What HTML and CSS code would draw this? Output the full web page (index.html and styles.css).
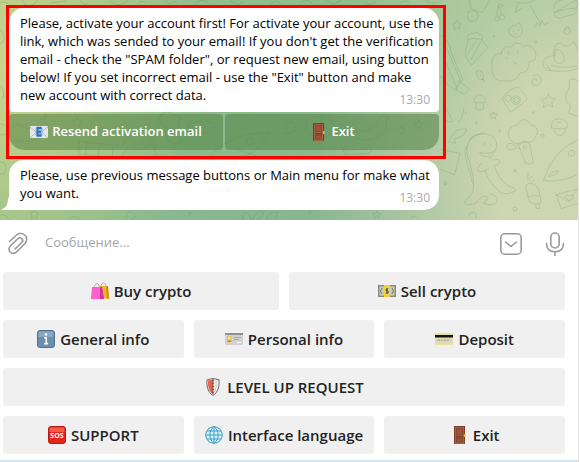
FILE: index.html
```html
<!DOCTYPE html>
<html lang="en">
<head>
    <meta charset="UTF-8">
    <meta name="viewport" content="width=device-width, initial-scale=1.0">
    <title>Chat</title>
    <link rel="stylesheet" href="styles.css">
</head>
<body>
    <!-- shared icons -->
    <svg class="defs" width="0" height="0" aria-hidden="true">
        <symbol id="door" viewBox="0 0 18 18">
            <rect x="4" y="0" width="11" height="18" fill="#7c3f26"/>
            <rect x="5" y="1" width="9" height="17" fill="#a5603f"/>
            <rect x="6.500" y="2.500" width="6" height="6" fill="#99563a" stroke="#7f452d" stroke-width=".8"/>
            <rect x="6" y="10" width="7" height="1.500" fill="#7a3c25"/>
            <rect x="6.500" y="12.500" width="6" height="3.500" fill="#99563a" stroke="#7f452d" stroke-width=".8"/>
            <rect x="14" y="8" width="1.500" height="3" fill="#e2b93b"/>
        </symbol>
    </svg>

    <div class="app">
        <main class="chat">
            <svg class="doodles" width="580" height="220" viewBox="0 0 580 220" aria-hidden="true">
                <g transform="translate(440 0) scale(.3333)">
                    <!-- cake -->
                    <path d="M75 165 L84 118 Q76 106 88 105 Q92 95 102 101 Q114 92 119 104 Q134 103 126 118 L143 143 L94 197 Z M84 118 Q104 112 126 118 M80 167 L111 118 M92 180 L123 124"/>
                    <!-- cloud -->
                    <path d="M156 190 C154 168 172 158 184 162 C184 138 208 138 214 142 C220 126 242 126 249 140 C266 130 282 142 286 156 C292 172 282 186 268 184 C268 204 258 222 240 218 C232 246 200 246 192 241 C164 250 154 222 156 190 Z M205 152 Q202 158 208 165 M235 150 L232 163 M196 172 L203 176 M219 183 Q225 196 232 186"/>
                    <!-- camera -->
                    <path d="M186 294 Q210 265 235 260 L262 294 Q260 304 211 337 Z M196 290 A9 9 0 1 0 212 300 A9 9 0 1 0 196 290 M215 300 a13 13 0 1 0 26 0 a13 13 0 1 0 -26 0 M221 300 a8 8 0 1 0 16 0 a8 8 0 1 0 -16 0"/>
                    <!-- stars -->
                    <path d="M325 281 L331 294 L347 297 L335 307 L339 321 L325 314 L310 323 L313 308 L304 298 L319 296 Z M51 59 L55 68 L65 71 L57 78 L60 87 L51 83 L43 88 L43 78 L37 72 L47 69 Z M160 335 L163 342 L172 343 L166 349 L168 356 L160 353 L153 356 L154 348 L149 342 L157 342 Z"/>
                    <!-- dino -->
                    <path d="M84 435 Q88 408 116 404 Q140 396 160 412 Q176 428 168 446 Q160 468 148 474 Q158 484 166 479 Q180 474 179 487 Q174 498 162 497 Q182 545 204 558 Q232 566 225 574 Q206 584 186 580 Q150 556 134 510 M84 435 Q76 462 90 490 Q104 530 100 568 Q98 584 84 594 Q68 608 78 613 Q100 616 110 606 Q126 584 142 590 Q142 606 128 610 Q146 618 166 612 Q178 600 164 586 L148 582 M119 457 Q144 466 168 451 M119 457 Q124 472 148 470 M84 435 q-9 4 -6 13 q-8 7 0 15 q-6 8 2 16 q-5 8 4 15 q-4 8 4 14 q-2 9 5 14 q-4 8 3 14 q-4 8 3 14 M89 425 q0 -12 11 -12 q5 -13 16 -9 q9 -10 18 -3 M126 490 Q104 506 116 514 Q136 518 148 502"/>
                    <path d="M134 428 v8 M153 431 v8"/>
                    <!-- tree and spoon -->
                    <path d="M206 404 C202 386 218 376 232 376 C240 354 266 354 272 374 C294 378 298 400 286 408 C284 426 264 432 248 424 C228 440 206 424 206 404 Z M246 428 L237 438 L256 488 Q264 496 279 488 L270 434 Q262 420 246 428 M250 442 a5 5 0 1 0 10 0 a5 5 0 1 0 -10 0 M238 432 Q228 442 222 434 Q206 424 199 440 Q204 454 220 448 Q232 440 240 446"/>
                    <!-- rocket -->
                    <path d="M420 416 Q338 450 310 542 Q370 548 420 520 M325 530 Q330 514 356 512 Q350 526 325 530 M386 464 a9 8 -30 1 0 18 -8 a9 8 -30 1 0 -18 8"/>
                    <!-- ice cream, envelope -->
                    <path d="M258 566 Q256 550 272 550 Q292 554 298 574 L304 606 Q290 620 268 604 Z M262 584 Q272 596 282 584 Q290 592 300 588 M286 614 L290 626 L300 626 L296 610 M264 542 V520 M270 540 L276 528 M274 546 L284 538 M348 584 L420 565 M348 584 L364 626 L420 608 M348 584 L384 604 L412 568 M376 592 Q380 580 388 588 Q400 582 402 592 L390 606 Z"/>
                    <!-- mushrooms -->
                    <path d="M334 384 Q332 356 358 356 Q384 358 382 382 Q370 390 334 384 Z M342 388 Q344 404 360 407 Q376 404 376 386 M350 364 q4 8 14 2 M103 306 Q102 284 120 284 Q138 290 136 306 Q120 312 103 306 Z M108 309 V324 Q118 336 130 326 V309"/>
                    <!-- cherries, burger, frog, cat -->
                    <path d="M164 56 a7 7 0 1 0 14 0 a7 7 0 1 0 -14 0 M178 52 a8 8 0 1 0 16 0 a8 8 0 1 0 -16 0 M170 49 L175 15 L186 44 M175 15 Q188 10 190 18 L178 23 M340 28 Q340 2 370 0 M408 0 Q418 14 410 24 Q376 24 342 38 Z M342 40 Q344 54 362 54 L402 42 Q414 36 408 26 M206 96 Q208 78 226 76 L238 67 L244 80 Q252 92 244 104 Q230 118 212 106 Z M220 90 v5 M236 88 v5 M224 102 l6 -2 M226 6 Q254 16 286 0 M270 14 L304 76 M232 14 L226 38 L246 24 M284 82 L292 68 L299 80 L306 60 L312 74 L326 68 M346 166 Q338 126 362 130 L370 137 L386 136 L402 126 Q418 148 414 186 M346 166 Q310 170 308 190 Q310 210 332 212 L318 192 M332 196 Q380 208 416 196 M332 212 Q384 218 416 204 M340 156 Q352 142 364 156 Q374 164 374 182 Q360 198 344 182 Z"/>
                    <!-- balloon, fish, leaf, shell -->
                    <path d="M0 104 Q28 120 33 154 Q50 200 68 239 L44 271 Q18 250 0 226 M22 148 L62 244 M10 170 L50 262 M56 242 L88 268 L74 284 L48 270 Z M26 426 L38 404 Q54 382 80 388 Q74 412 44 416 L46 430 Z M109 214 Q130 204 131 238 Q110 244 109 214 M118 222 L134 246 M276 228 Q300 216 304 240 Q298 260 280 256 Q270 242 284 236 Q296 238 290 246 M372 92 Q384 62 392 98 Q382 108 372 98 Z M374 88 l14 -4 M84 36 Q106 24 116 46 Q112 66 92 65 Q78 56 84 36 M88 0 L92 26 L126 38 L150 0 M72 324 L66 352 L54 366 M80 334 L76 342 M18 362 Q42 372 36 358 L12 316 M2 448 L60 460 L44 524 L0 508 M88 652 Q84 638 100 636 Q114 644 108 656 M388 240 Q404 232 418 246 M388 240 V262 Q364 298 392 318 L386 340 L416 350"/>
                    <path d="M159 109 a3 3 0 1 0 6 0 a3 3 0 1 0 -6 0 M284 126 a3 3 0 1 0 6 0 a3 3 0 1 0 -6 0 M303 408 a5 5 0 1 0 10 0 a5 5 0 1 0 -10 0 M277 338 a3 3 0 1 0 6 0 a3 3 0 1 0 -6 0 M106 370 a3 3 0 1 0 6 0 a3 3 0 1 0 -6 0 M176 394 a3 3 0 1 0 6 0 a3 3 0 1 0 -6 0 M12 550 a4 4 0 1 0 8 0 a4 4 0 1 0 -8 0 M219 627 a6 6 0 1 0 12 0 a6 6 0 1 0 -12 0 M223 512 a3 3 0 1 0 6 0 a3 3 0 1 0 -6 0"/>
                </g>
                <g transform="translate(0 105) scale(.3333)">
                    <path d="M34 66 Q46 50 70 66 Q100 80 114 56 Q118 36 140 30 Q126 48 142 54 Q152 90 112 100 Q74 116 36 104 M232 38 L236 48 L246 50 L238 56 L240 66 L231 60 L222 64 L224 54 L217 47 L228 46 Z M238 108 L340 122 L336 156 L236 148 Z M262 112 L256 150 M300 118 L294 154 M370 120 Q380 80 420 84 Q464 86 466 120 Q456 146 478 160 M396 132 Q430 138 456 118 M404 106 v8 M428 108 v8 M384 130 Q374 140 364 156 M482 28 Q506 10 522 32 Q544 28 540 50 L528 84 L548 110 Q520 126 504 106 Q490 84 504 70 Q470 56 482 28 M560 60 Q600 40 640 54 Q650 70 618 84 Q580 92 560 60 M630 150 Q700 80 810 82 Q770 160 690 158 M740 110 a10 10 0 1 0 20 0 a10 10 0 1 0 -20 0 M700 130 L770 152 M850 70 Q876 30 888 70 Q880 92 850 84 M920 40 Q1000 20 1010 80 Q960 112 918 80 Z M1024 60 Q1080 100 1130 60 Q1140 20 1166 36 Q1150 60 1162 74 Q1120 118 1068 100 M1190 76 Q1200 58 1216 76 Q1212 92 1200 84 M1256 44 l4 9 10 1 -8 7 2 10 -9 -5 -9 5 2 -10 -7 -7 10 -1 Z M1030 136 L1100 132 Q1112 120 1116 134 L1106 146 L1034 148 Z"/>
                    <path d="M0 90 Q16 84 24 96 M0 170 Q22 174 18 196 Q10 214 0 206 M0 56 L14 60 M102 316 L106 323 L115 324 L109 331 L112 340 L103 335 L94 340 L96 330 L90 323 L99 322 Z M204 345 Q220 322 242 345 M380 342 Q374 322 394 320 Q410 328 402 340 M392 336 a5 5 0 1 0 10 0 M730 345 Q722 324 736 322 Q754 330 752 345 M756 345 Q770 316 790 318 Q786 344 770 345 M796 345 Q812 316 834 322 Q830 338 818 345 M566 326 a4 4 0 1 0 8 0 a4 4 0 1 0 -8 0 M0 330 Q22 328 26 345 M926 322 a4 4 0 1 0 8 0 a4 4 0 1 0 -8 0 M1130 318 l4 7 8 1 -6 6 1 8 -8 -4 -7 4 1 -8 -6 -6 9 -1 Z M1230 342 Q1240 326 1256 342"/>
                </g>
                <g>
                    <path d="M0 4 q5 -4 8 0 M22 0 q3 8 12 4 l4 -4 M49 3 l18 -2 M80 0 q2 5 8 4 M110 1 q9 8 18 -1 M137 4 q4 -5 8 -1 M165 0 l4 4 8 -3 M196 3 q6 -5 12 -1 M230 0 q5 7 14 2 M270 4 l6 -3 5 3 M300 3 q7 -5 12 0 M325 0 l8 4 9 -4 M364 2 q6 5 12 0 M400 4 q4 -5 9 -2 M425 0 q5 5 14 2 M0 30 q6 4 3 12 l-3 2 M0 86 q5 4 3 12"/>
                </g>
            </svg>

            <section class="highlight">
                <div class="bubble first">
                    <p>
                        Please, activate your account first! For activate your account, use the<br>
                        link, which was sended to your email! If you don't get the verification<br>
                        email - check the "SPAM folder", or request new email, using button<br>
                        below! If you set incorrect email - use the "Exit" button and make<br>
                        new account with correct data.
                        <time>13:30</time>
                    </p>
                </div>
                <div class="inline-buttons">
                    <button type="button">
                        <svg width="18" height="18" viewBox="0 0 18 18" aria-hidden="true">
                            <rect x="0" y="3" width="18" height="12" rx="1" fill="#e4e8ec"/>
                            <path d="M0 4 L9 11 L18 4 M0 15 L6 9 M18 15 L12 9" fill="none" stroke="#b4bcc4"/>
                            <rect x="5.500" y="3.500" width="7" height="10.500" rx="2" fill="#8db6dd"/>
                            <path d="M11.500 5 H7.500 V12.500 H11.500 M7.500 8.800 H11" fill="none" stroke="#2f6fb4" stroke-width="1.800"/>
                        </svg>
                        <span>Resend activation email</span>
                    </button>
                    <button type="button">
                        <svg width="18" height="18" aria-hidden="true"><use href="#door"/></svg>
                        <span>Exit</span>
                    </button>
                </div>
            </section>

            <div class="bubble last">
                <p>
                    Please, use previous message buttons or Main menu for make what<br>
                    you want.
                    <time>13:30</time>
                </p>
                <svg class="tail" width="7" height="12" viewBox="0 0 7 12" aria-hidden="true">
                    <path d="M7 0 H6 C6 6 4 10 0 11 V12 H7 Z" fill="#fff"/>
                </svg>
            </div>
        </main>

        <form class="composer">
            <button type="button" aria-label="Attach">
                <svg width="20" height="24" viewBox="0 0 20 24">
                    <path d="M1.500 9.500 L8.500 3 C11 .800 14.500 1 16.800 3 C19.300 5.300 19.200 9 17 11.500 L8.500 20 C6.800 21.700 4 21.900 2.300 20.200 C.500 18.400 .600 15.700 2.300 14 L9.800 6.700 C11 5.600 12.700 5.600 13.800 6.600 C14.900 7.700 14.900 9.400 13.800 10.500 L7 17"/>
                </svg>
            </button>
            <input type="text" placeholder="Сообщение..." aria-label="Сообщение">
            <button type="button" aria-label="Hide keyboard">
                <svg width="24" height="24" viewBox="0 0 24 24">
                    <rect x="1.800" y="1.800" width="20.400" height="20.400" rx="4"/>
                    <path d="M6.500 10 L12 14.500 L17.500 10"/>
                </svg>
            </button>
            <button type="button" aria-label="Record voice">
                <svg width="20" height="24" viewBox="0 0 20 24">
                    <rect x="5.800" y="1" width="8.400" height="15" rx="4.200"/>
                    <path d="M1.500 11.500 C1.500 17 5 19.700 10 19.700 C15 19.700 18.500 17 18.500 11.500 M10 19.700 V24"/>
                </svg>
            </button>
        </form>

        <nav class="keyboard">
            <div class="row">
                <button type="button">
                    <svg width="18" height="18" viewBox="0 0 18 18" aria-hidden="true">
                        <path d="M9 4 L17 4 L18 17 L10 16 Z" fill="#f0b323"/>
                        <path d="M15 4 L17 4 L18 17 L16 16 Z" fill="#c98d12"/>
                        <path d="M10 5 C10 -.500 15 -.500 15 5 M3 7 C3 0 9 0 9 7" fill="none" stroke="#d99ba8"/>
                        <path d="M1 5 L11 5 L13 17 L0 17 Z" fill="#ff5fc8"/>
                        <path d="M9 5 L11 5 L13 17 L9 17 Z" fill="#cf35a0"/>
                    </svg>
                    <span>Buy crypto</span>
                </button>
                <button type="button">
                    <svg width="18" height="18" viewBox="0 0 18 18" aria-hidden="true">
                        <rect x="0" y="3" width="18" height="12" fill="#8f9183"/>
                        <rect x="1" y="4" width="16" height="10" fill="#c9c9b6" stroke="#74766a" stroke-width=".6"/>
                        <path d="M4 6 Q1 9 4 12 M14 6 Q17 9 14 12" fill="none" stroke="#77796c"/>
                        <rect x="6" y="3" width="6" height="12" fill="#f5cf2c"/>
                        <ellipse cx="9" cy="9" rx="2.500" ry="3.500" fill="#e9dfa0"/>
                        <path d="M10.500 7 H8 V9 H10.200 V11 H7.500 M9 6 V12" fill="none" stroke="#4b4a32" stroke-width=".9"/>
                    </svg>
                    <span>Sell crypto</span>
                </button>
            </div>
            <div class="row">
                <button type="button">
                    <svg width="18" height="18" viewBox="0 0 18 18" aria-hidden="true">
                        <rect x=".500" y=".500" width="17" height="17" rx="2.500" fill="#6c8fb0" stroke="#4d6f90"/>
                        <path d="M1.500 3 Q1.500 1.500 3 1.500 H15 Q16.500 1.500 16.500 3 V7 H1.500 Z" fill="#87a7c4"/>
                        <circle cx="9" cy="4.500" r="1.300" fill="#fff"/>
                        <path d="M7.200 7.800 H9.300 V13.500 M7 13.700 H11.200" fill="none" stroke="#fff" stroke-width="1.500"/>
                    </svg>
                    <span>General info</span>
                </button>
                <button type="button">
                    <svg width="18" height="18" viewBox="0 0 18 18" aria-hidden="true">
                        <rect x="0" y="3" width="18" height="12" rx="1" fill="#d2d2d2"/>
                        <rect x="0" y="3" width="18" height="2" fill="#8e8e8e"/>
                        <rect x="2" y="6.500" width="4.500" height="5.500" fill="#f5b81f"/>
                        <circle cx="4.200" cy="8.300" r="1.200" fill="#fff0b0"/>
                        <path d="M2.500 12 Q4.200 9 6 12 Z" fill="#b07c18"/>
                        <path d="M8.500 7.500 H16 M8.500 9.500 H14" stroke="#9a9a9a" stroke-width=".8"/>
                        <path d="M12 12.500 H16" stroke="#fff"/>
                    </svg>
                    <span>Personal info</span>
                </button>
                <button type="button">
                    <svg width="18" height="18" viewBox="0 0 18 18" aria-hidden="true">
                        <rect x="0" y="3" width="18" height="12" rx="1" fill="#e5dfa3"/>
                        <rect x="0" y="5" width="18" height="2.500" fill="#141414"/>
                        <rect x="1.500" y="9" width="15" height="2.500" fill="#d0d2d2"/>
                        <path d="M3 10.200 H15" stroke="#9ea6b5" stroke-dasharray="2 1"/>
                    </svg>
                    <span>Deposit</span>
                </button>
            </div>
            <div class="row">
                <button type="button">
                    <svg width="18" height="18" viewBox="0 0 18 18" aria-hidden="true">
                        <path d="M9 .500 L15 1.800 C15.600 9 13.800 14.500 9 17.500 C4.200 14.500 2.400 9 3 1.800 Z" fill="#f2f0ee" stroke="#6e6663"/>
                        <path d="M9 1.500 L4 2.600 C3.600 8.500 5 13.500 9 16.400 Z" fill="#e8604e"/>
                        <path d="M9 1.500 V16.400" stroke="#6b403a" stroke-width="1.600" stroke-dasharray="2 1"/>
                        <path d="M12 3 C12.500 8 12 11 10.500 14" fill="none" stroke="#c9c4c0"/>
                    </svg>
                    <span>LEVEL UP REQUEST</span>
                </button>
            </div>
            <div class="row">
                <button type="button">
                    <svg width="18" height="18" viewBox="0 0 18 18" aria-hidden="true">
                        <rect x=".500" y=".500" width="17" height="17" rx="2.500" fill="#e3261b" stroke="#b81a12"/>
                        <path d="M1.500 3 Q1.500 1.500 3 1.500 H15 Q16.500 1.500 16.500 3 V6 H1.500 Z" fill="#f4594b"/>
                        <text class="sos" x="9" y="12">SOS</text>
                    </svg>
                    <span>SUPPORT</span>
                </button>
                <button type="button">
                    <svg width="18" height="18" viewBox="0 0 18 18" aria-hidden="true">
                        <circle cx="9" cy="9" r="8.300" fill="#d5f1fb" stroke="#3f9fc4"/>
                        <path d="M9 .700 V17.300 M.700 9 H17.300 M2 5 H16 M2 13 H16 M9 .700 C3.500 4 3.500 14 9 17.300 C14.500 14 14.500 4 9 .700" fill="none" stroke="#3f9fc4"/>
                    </svg>
                    <span>Interface language</span>
                </button>
                <button type="button">
                    <svg width="18" height="18" aria-hidden="true"><use href="#door"/></svg>
                    <span>Exit</span>
                </button>
            </div>
        </nav>
        <div class="bottom-line"></div>
    </div>
</body>
</html>
```
FILE: styles.css
```css
* {
    margin: 0;
    padding: 0;
    box-sizing: border-box;
}

body {
    background-color: #fff;
    color: #000;
    font-family: "Open Sans", "Noto Sans", sans-serif;
    font-size: 13px;
    line-height: 18px;
}

button,
input {
    border: none;
    background: none;
    font-family: inherit;
    font-size: inherit;
}

button {
    cursor: pointer;
}

.defs {
    position: absolute;
}

.app {
    margin-right: 1px;
    border-right: 1px solid #e3e3e3;
}

/* Messages */
.chat {
    position: relative;
    overflow: hidden;
    padding: 5px 6px 10px;
    background:
        radial-gradient(ellipse 200px 260px at 0 30%, #cbd58b 0%, rgba(203, 213, 139, 0) 100%),
        radial-gradient(ellipse 270px 340px at 100% 80%, #cdd6b1 30%, rgba(205, 214, 177, 0) 100%),
        linear-gradient(160deg, #97bf8a 0%, #8abb8c 50%, #84b193 100%);
}

.doodles {
    position: absolute;
    top: 0;
    left: 0;
    fill: none;
    stroke: #4f7f45;
    stroke-opacity: 0.2;
    stroke-width: 3;
}

.doodles g:last-child {
    stroke-width: 1;
}

.highlight {
    position: relative;
    max-width: 440px;
    padding: 0 4px 6px 0;
    border: 3px solid #f00;
}

.bubble {
    position: relative;
    padding: 6px 3px 8px 11px;
    background-color: #fff;
    border-radius: 15px;
}

.bubble time {
    float: right;
    margin: 5px 6px -5px 0;
    color: #a0acb6;
    font-size: 12px;
}

.first {
    border-bottom-left-radius: 4px;
    border-bottom-right-radius: 4px;
}

.last {
    max-width: 430px;
    margin: 1px 0 0 3px;
    border-bottom-left-radius: 0;
}

.last time {
    color: #a8a8a8;
}

.tail {
    position: absolute;
    right: 100%;
    bottom: 0;
}

.inline-buttons {
    display: flex;
    gap: 2px;
    margin-top: 2px;
}

.inline-buttons button {
    display: flex;
    flex: 1;
    align-items: center;
    justify-content: center;
    gap: 4px;
    height: 36px;
    color: #fff;
    font-weight: 600;
    background-color: rgba(84, 130, 70, 0.55);
    border-radius: 4px;
}

.inline-buttons span {
    padding-bottom: 2px;
}

.inline-buttons button:first-child {
    border-bottom-left-radius: 15px;
}

.inline-buttons button:last-child {
    border-bottom-right-radius: 15px;
}

/* Message input */
.composer {
    display: flex;
    align-items: center;
    padding: 0 13px 0 8px;
    height: 47px;
}

.composer button {
    display: flex;
}

.composer svg {
    fill: none;
    stroke: #999;
    stroke-width: 1.6;
    stroke-linecap: round;
    stroke-linejoin: round;
}

.composer input {
    flex: 1;
    min-width: 0;
    padding: 0 17px 3px;
    outline: none;
}

.composer input::placeholder {
    color: #a5a5a5;
}

.composer button:last-child {
    margin-left: 22px;
}

/* Bot keyboard */
.keyboard {
    display: flex;
    flex-direction: column;
    gap: 10px;
    padding: 5px 13px 6px 3px;
}

.row {
    display: flex;
    gap: 10px;
}

.row button {
    display: flex;
    flex: 1;
    align-items: center;
    justify-content: center;
    gap: 5px;
    height: 38px;
    color: #222;
    font-size: 15px;
    font-weight: 600;
    white-space: nowrap;
    background-color: #f0f0f0;
    border-radius: 3px;
}

.sos {
    fill: #fff;
    font-size: 7px;
    font-weight: 700;
    text-anchor: middle;
}

.bottom-line {
    height: 2px;
    background-color: #d3e3f0;
}
```
